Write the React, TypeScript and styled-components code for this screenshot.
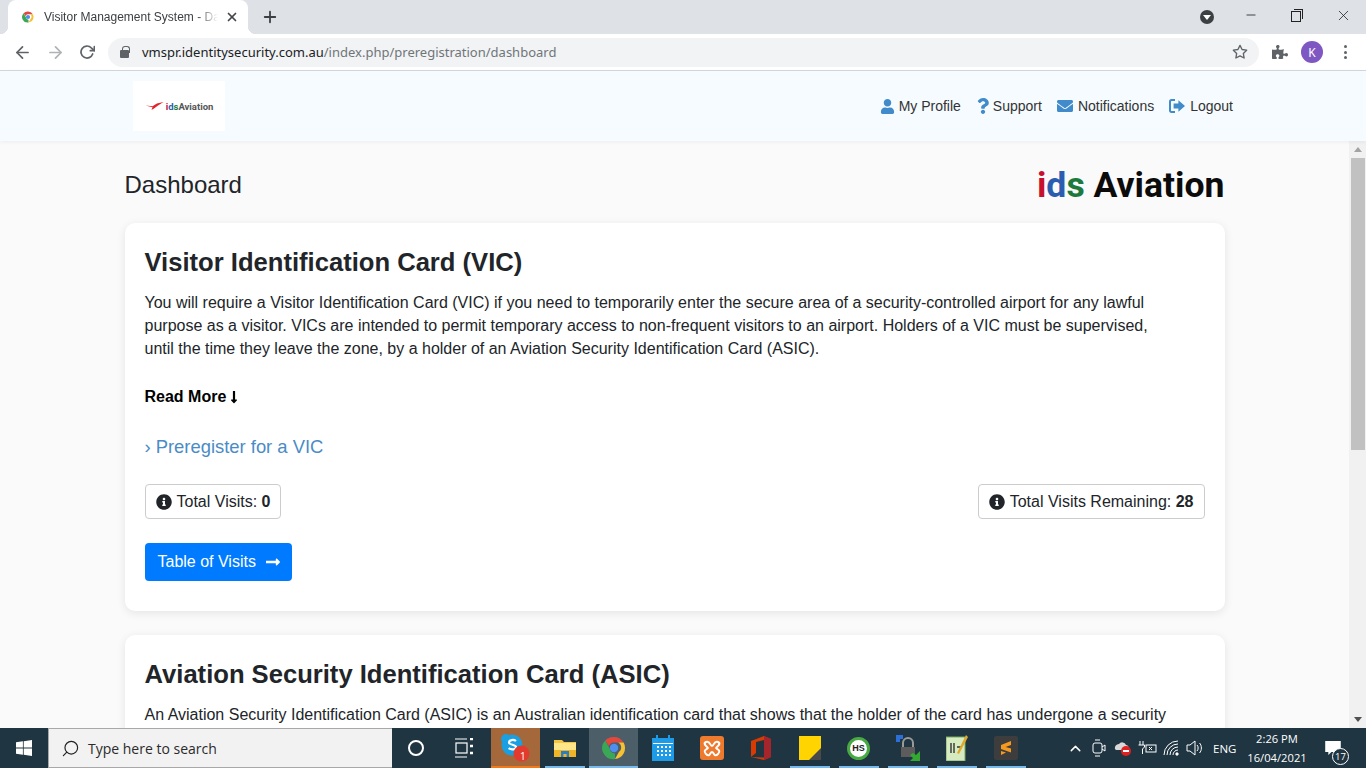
import React from 'react'
import styled, { createGlobalStyle } from 'styled-components'
import {
  FaUser,
  FaQuestion,
  FaEnvelope,
  FaInfoCircle,
  FaLongArrowAltRight,
  FaLongArrowAltDown,
  FaPuzzlePiece,
} from 'react-icons/fa'
import { FiArrowLeft, FiArrowRight, FiRotateCw, FiPlus, FiX, FiMinus, FiStar, FiChevronUp, FiSearch } from 'react-icons/fi'

const GlobalStyle = createGlobalStyle`
  html, body { margin: 0; padding: 0; height: 100%; overflow: hidden; }
  body { font-family: "Liberation Sans", Arial, sans-serif; color: #212529; }
  * { box-sizing: border-box; }
`

const ChromeIcon = () => (
  <svg width="24" height="24" viewBox="0 0 24 24">
    <path d="M12 1a11 11 0 0 1 9.6 5.6H12a5.4 5.4 0 0 0-5.1 3.6L3.2 4.6A11 11 0 0 1 12 1z" fill="#e2483d" />
    <path d="M21.6 6.6A11 11 0 0 1 13 23l4-7.2a5.4 5.4 0 0 0-.9-9.2z" fill="#f6c231" />
    <path d="M13 23A11 11 0 0 1 3.2 4.6L7.7 12.6A5.4 5.4 0 0 0 13 17.4z" fill="#3aa757" />
    <circle cx="12" cy="12" r="4.2" fill="#4f8ef0" />
  </svg>
)

const LogoutIcon = () => (
  <svg width="16" height="14" viewBox="0 0 16 14" fill="#428bca">
    <path d="M0 2.4C0 1 1 0 2.4 0H6v2H2.6c-.4 0-.6.2-.6.6v8.8c0 .4.2.6.6.6H6v2H2.4C1 14 0 13 0 11.6z" />
    <path d="M9.4 1.2 16 7l-6.6 5.8V9.4H4.6V4.6h4.800z" />
  </svg>
)

const PlaneMark = () => (
  <svg width="19" height="8" viewBox="0 0 18 8">
    <path d="M0 3.600 7 4.200 11.400 1.400 18 0 12.500 3.400 8.500 6.500 6 8 7 5.200z" fill="#e2232b" />
  </svg>
)

const WindowsLogo = () => (
  <svg width="16" height="16" viewBox="0 0 16 16" fill="#fff">
    <path d="M0 2.300 6.900 1.300v6.200H0zM7.700 1.200 16 0v7.500H7.700zM0 8.400h6.900v6.300L0 13.700zM7.700 8.400H16V16l-8.300-1.200z" />
  </svg>
)

const TaskViewIcon = () => (
  <svg width="18" height="20" viewBox="0 0 18 20" fill="none" stroke="#fff" strokeWidth="1.2">
    <path d="M0 1h12M0 19h12" />
    <rect x="1" y="5" width="11" height="10" />
    <path d="M15 1h3M15 8h3M15 15h3" strokeWidth="2.4" />
  </svg>
)

const SkypeIcon = () => (
  <svg width="32" height="30" viewBox="0 0 32 30">
    <circle cx="12" cy="12" r="10.5" fill="#1a9fe0" />
    <circle cx="6" cy="6" r="5" fill="#1a9fe0" />
    <circle cx="18" cy="18" r="5" fill="#1a9fe0" />
    <path d="M16 8c-2-1.600-7-1.400-7 1.400 0 3 7 1.800 7 4.800 0 2.600-5 2.800-7.400 1" fill="none" stroke="#fff" strokeWidth="2.2" />
    <circle cx="21.500" cy="20.500" r="8" fill="#e23b2e" />
  </svg>
)

const ExplorerIcon = () => (
  <svg width="22" height="22" viewBox="0 0 22 22">
    <path d="M0 3h8l2 2h12v15H0z" fill="#f4c542" />
    <rect x="0" y="6" width="22" height="7" fill="#fde58a" />
    <rect x="0" y="13" width="22" height="7" fill="#f0b429" />
    <path d="M7 20v-6h8v6h-2.400v-3h-3.200v3z" fill="#2a7fc1" />
  </svg>
)

const CalendarIcon = () => (
  <svg width="22" height="26" viewBox="0 0 22 26" fill="#fff">
    <rect x="0" y="3" width="22" height="23" fill="#1e9be6" />
    <rect x="4" y="0" width="2" height="6" fill="#1e9be6" />
    <rect x="16" y="0" width="2" height="6" fill="#1e9be6" />
    <rect x="1" y="8" width="20" height="1" />
    {[11, 15, 19].map(y =>
      [5, 9, 13, 17].map(x => <rect key={`${x}-${y}`} x={x} y={y} width="2" height="2" />),
    )}
  </svg>
)

const XamppIcon = () => (
  <svg width="24" height="24" viewBox="0 0 24 24">
    <rect width="24" height="24" rx="3" fill="#ee7a2e" />
    <path d="M6 6c4-2 4 4 6 4s2-6 6-4-2 5-2 6 6 2 2 6-4-2-6-2-2 6-6 2 2-5 2-6-6-4-2-6z" fill="none" stroke="#fff" strokeWidth="2" />
  </svg>
)

const OfficeIcon = () => (
  <svg width="20" height="24" viewBox="0 0 20 24">
    <path d="M13 0 20 3v18l-7 3-13-3 13 .6V4L5 6v11l-5 4V5z" fill="#d83b01" />
    <path d="M13 0 20 3v18l-7 3z" fill="#a4262c" />
  </svg>
)

const StickyIcon = () => (
  <svg width="22" height="24" viewBox="0 0 22 24">
    <rect width="22" height="24" fill="#ffd400" />
    <path d="M10 24 22 12v12z" fill="#4a4a4a" />
  </svg>
)

const LockIcon = () => (
  <svg width="24" height="26" viewBox="0 0 24 26">
    <path d="M0 0h7v4H4v3H0z" fill="#2c6fd6" />
    <path d="M7 12V8a5 5 0 0 1 10 0v4" fill="none" stroke="#9a9a9a" strokeWidth="2" />
    <rect x="5" y="12" width="14" height="10" fill="#5c5c5c" />
    <path d="M24 16v10H14l3-3-3-3 3-2 3 2z" fill="#35a832" />
  </svg>
)

const NotepadIcon = () => (
  <svg width="22" height="26" viewBox="0 0 22 26">
    <rect y="2" width="19" height="24" fill="#d6ecc0" stroke="#7aa860" />
    <path d="M5 8v10M8 8v10M11 12h4" stroke="#333" strokeWidth="1.4" />
    <path d="M20 0 11 18l2 1 9-17z" fill="#e0a92c" />
  </svg>
)

const SublimeIcon = () => (
  <svg width="24" height="24" viewBox="0 0 24 24">
    <rect width="24" height="24" rx="2" fill="#3d3d3d" />
    <path d="M17 5 7 9v4l10 3.400v-4L11.600 11 17 9zM7 15l5 1.600-5 2.400z" fill="#f59a1e" />
  </svg>
)

const Screen = styled.div`
  width: 1366px;
  height: 768px;
  display: flex;
  flex-direction: column;
  overflow: hidden;
  background: #fafafa;
`

const TabStrip = styled.div`
  height: 34px;
  background: #dee1e6;
  display: flex;
  align-items: flex-end;
  padding-left: 8px;
`

const Tab = styled.div`
  width: 240px;
  height: 34px;
  background: #fff;
  border-radius: 8px 8px 0 0;
  display: flex;
  align-items: center;
  padding: 0 9px 0 14px;
  color: #3c4043;
  font-size: 12px;
  position: relative;
  &::before, &::after {
    content: '';
    position: absolute;
    bottom: 0;
    width: 8px;
    height: 8px;
  }
  &::before {
    left: -8px;
    background: radial-gradient(circle at 0 0, transparent 8px, #fff 8.5px);
  }
  &::after {
    right: -8px;
    background: radial-gradient(circle at 100% 0, transparent 8px, #fff 8.5px);
  }
`

const Favicon = styled.span`
  display: flex;
  margin-right: 10px;
  svg { width: 12px; height: 12px; }
`

const TabTitle = styled.span`
  flex: 1;
  white-space: nowrap;
  overflow: hidden;
  -webkit-mask-image: linear-gradient(to right, #000 88%, transparent);
  mask-image: linear-gradient(to right, #000 88%, transparent);
`

const TabClose = styled.span`
  display: flex;
  margin-left: 7px;
  color: #44474a;
`

const NewTab = styled.span`
  display: flex;
  align-self: center;
  margin-left: 13px;
  color: #3c4043;
`

const StripSpacer = styled.div`
  flex: 1;
`

const ProfileDot = styled.span`
  width: 14px;
  height: 14px;
  border-radius: 50%;
  background: #3c4043;
  align-self: center;
  margin-right: 14px;
  display: flex;
  align-items: center;
  justify-content: center;
  &::after {
    content: '';
    border-left: 4px solid transparent;
    border-right: 4px solid transparent;
    border-top: 5px solid #fff;
    margin-top: 1px;
  }
`

const WindowButton = styled.span`
  width: 46px;
  align-self: stretch;
  padding-bottom: 4px;
  display: flex;
  align-items: center;
  justify-content: center;
  color: #1f1f1f;
`

const RestoreIcon = styled.span`
  width: 10px;
  height: 11px;
  border: 1px solid #222;
  position: relative;
  margin: 2px 2px 0 0;
  &::after {
    content: '';
    position: absolute;
    top: -3px;
    right: -3px;
    width: 8px;
    height: 9px;
    border-top: 1px solid #222;
    border-right: 1px solid #222;
  }
`

const Toolbar = styled.div`
  height: 37px;
  background: #fff;
  border-bottom: 1px solid #d4d7db;
  display: flex;
  align-items: center;
  padding: 0 0 0 13px;
  flex: none;
`

const NavButton = styled.span<{ $dim?: boolean }>`
  display: flex;
  width: 33px;
  color: ${p => (p.$dim ? '#b0b3b6' : '#5f6368')};
`

const Omnibox = styled.div`
  width: 1151px;
  height: 29px;
  margin-left: -4px;
  background: #f1f3f4;
  border-radius: 15px;
  display: flex;
  align-items: center;
  padding: 0 11px 0 12px;
  font-family: "Noto Sans", sans-serif;
  font-size: 13px;
  color: #70757a;
`

const Padlock = styled.span`
  width: 9px;
  height: 8px;
  background: #5f6368;
  border-radius: 1px;
  margin: 3px 13px 0 0;
  position: relative;
  &::before {
    content: '';
    position: absolute;
    left: 1.5px;
    top: -4px;
    width: 6px;
    height: 6px;
    border: 1.4px solid #5f6368;
    border-bottom: none;
    border-radius: 3px 3px 0 0;
  }
`

const Domain = styled.span`
  color: #202124;
`

const UrlText = styled.span`
  flex: 1;
  white-space: nowrap;
`

const ExtensionIcon = styled.span`
  display: flex;
  margin-left: 13px;
  color: #5f6368;
`

const Avatar = styled.span`
  width: 22px;
  height: 22px;
  margin-left: 13px;
  border-radius: 50%;
  background: #7e57c2;
  color: #fff;
  font-family: "Noto Sans", sans-serif;
  font-size: 12px;
  display: flex;
  align-items: center;
  justify-content: center;
`

const MenuDots = styled.span`
  margin-left: 21px;
  display: flex;
  flex-direction: column;
  gap: 2.5px;
  i {
    width: 3px;
    height: 3px;
    border-radius: 50%;
    background: #5f6368;
    display: block;
  }
`

const SiteHeader = styled.header`
  height: 70px;
  flex: none;
  background: #f5fbff;
  box-shadow: 0 1px 4px rgba(0, 0, 0, 0.06);
  position: relative;
  z-index: 1;
`

const HeaderInner = styled.div`
  width: 1100px;
  height: 100%;
  margin: 0 auto;
  display: flex;
  align-items: center;
  justify-content: space-between;
`

const LogoBox = styled.div`
  width: 92px;
  height: 50px;
  background: #fff;
  display: flex;
  align-items: center;
  justify-content: center;
  gap: 2px;
`

const LogoText = styled.span`
  font-family: "Roboto", sans-serif;
  font-weight: 700;
  font-size: 9.5px;
  color: #555;
`

const Brand = styled.span<{ $color: string }>`
  color: ${p => p.$color};
`

const NavList = styled.nav`
  display: flex;
  gap: 15px;
  align-items: center;
`

const NavItem = styled.a`
  display: flex;
  align-items: center;
  gap: 5px;
  font-size: 14px;
  color: #333;
  svg { color: #428bca; flex: none; }
`

const ProfileGlyph = styled(FaUser)`
  margin-right: -1px;
`

const SupportGlyph = styled(FaQuestion)`
  margin: 0 -3px 0 -1px;
`

const Body = styled.div`
  flex: 1;
  min-height: 0;
  display: flex;
`

const Page = styled.main`
  flex: 1;
  overflow: hidden;
  background: #fafafa;
`

const Container = styled.div`
  width: 1100px;
  margin: 0 auto;
  padding-top: 28px;
`

const PageHead = styled.div`
  display: flex;
  justify-content: space-between;
  align-items: center;
  height: 32px;
  margin-bottom: 22px;
`

const PageTitle = styled.h1`
  margin: 0;
  font-size: 24px;
  font-weight: 400;
  color: #212529;
`

const BigLogo = styled.div`
  font-family: "Roboto", sans-serif;
  font-weight: 700;
  font-size: 35.6px;
  color: #0b0b0b;
  line-height: 32px;
`

const Card = styled.section`
  background: #fff;
  border-radius: 10px;
  box-shadow: 0 2px 10px rgba(0, 0, 0, 0.09);
  padding: 20px 20px 30px;
  margin-bottom: 24px;
`

const CardTitle = styled.h2`
  margin: 0 0 10px;
  font-size: 25.6px;
  line-height: 38px;
  font-weight: 700;
  color: #212529;
`

const Copy = styled.p`
  margin: 0;
  max-width: 1030px;
  font-size: 16px;
  line-height: 23px;
  color: #212529;
`

const ReadMore = styled.a`
  display: flex;
  align-items: center;
  margin-top: 25px;
  height: 24px;
  font-size: 16px;
  font-weight: 700;
  color: #000;
  gap: 4px;
  svg { width: 8px; height: 14px; }
`

const PreLink = styled.a`
  display: block;
  margin-top: 25px;
  height: 26px;
  line-height: 26px;
  font-size: 18.4px;
  color: #4a8bc6;
`

const StatRow = styled.div`
  display: flex;
  justify-content: space-between;
  margin-top: 24px;
`

const Stat = styled.div`
  height: 35px;
  padding: 0 10px;
  display: flex;
  align-items: center;
  gap: 5px;
  border: 1px solid #ccc;
  border-radius: 4px;
  font-size: 16px;
  color: #212529;
`

const PrimaryButton = styled.a`
  display: inline-flex;
  align-items: center;
  gap: 9px;
  margin-top: 24px;
  height: 38px;
  padding: 0 11px 0 13px;
  background: #007bff;
  border-radius: 4px;
  color: #fff;
  font-size: 16px;
`

const ScrollBar = styled.div`
  width: 17px;
  flex: none;
  background: #f1f1f1;
  display: flex;
  flex-direction: column;
  align-items: center;
`

const ScrollArrow = styled.span<{ $down?: boolean }>`
  height: 17px;
  flex: none;
  display: flex;
  align-items: center;
  &::after {
    content: '';
    border-left: 4px solid transparent;
    border-right: 4px solid transparent;
    ${p => (p.$down ? 'border-top: 5px solid #505050;' : 'border-bottom: 5px solid #a3a3a3;')}
  }
`

const ScrollTrack = styled.div`
  flex: 1;
  width: 100%;
  padding: 0 1px 0 2px;
`

const ScrollThumb = styled.div`
  height: 292px;
  background: #c1c1c1;
`

const Taskbar = styled.footer`
  height: 40px;
  flex: none;
  background: #1f3541;
  display: flex;
  align-items: stretch;
  color: #fff;
  position: relative;
  z-index: 2;
`

const StartButton = styled.span`
  width: 48px;
  display: flex;
  align-items: center;
  justify-content: center;
`

const SearchBox = styled.div`
  width: 344px;
  background: #f2f2f2;
  border: 1px solid #a8a8a8;
  border-width: 1px 0 1px 1px;
  display: flex;
  align-items: center;
  gap: 8px;
  padding-left: 12px;
  font-family: "Open Sans", sans-serif;
  font-size: 14px;
  color: #2b2b2b;
  svg { transform: scaleX(-1); }
`

const SystemButton = styled.span`
  width: 48px;
  display: flex;
  align-items: center;
  justify-content: center;
`

const CortanaRing = styled.span`
  width: 16px;
  height: 16px;
  border: 2.5px solid #fff;
  border-radius: 50%;
`

const Apps = styled.div`
  display: flex;
  margin-left: 3px;
`

const AppTile = styled.span<{ $state?: 'alert' | 'active' | 'open' }>`
  width: 49px;
  display: flex;
  align-items: center;
  justify-content: center;
  position: relative;
  background: ${p => (p.$state === 'alert' ? '#a5683a' : p.$state === 'active' ? '#4c5f69' : 'transparent')};
  ${p =>
    p.$state &&
    `&::after {
      content: '';
      position: absolute;
      bottom: 0;
      left: ${p.$state === 'open' ? '5px' : '0'};
      right: ${p.$state === 'open' ? '4px' : '0'};
      height: 2px;
      background: ${p.$state === 'alert' ? '#f07a1a' : '#76b9ed'};
    }`}
`

const UnreadCount = styled.span`
  position: absolute;
  left: 29px;
  top: 21px;
  font-size: 10px;
  font-family: "Open Sans", sans-serif;
  color: #fff;
`

const HsBadge = styled.span`
  width: 23px;
  height: 23px;
  border-radius: 50%;
  background: #fff;
  border: 3px solid #49a942;
  color: #222;
  font-size: 9px;
  font-weight: 700;
  display: flex;
  align-items: center;
  justify-content: center;
`

const Tray = styled.div`
  flex: 1;
  display: flex;
  align-items: center;
  padding-left: 33px;
  font-family: "Open Sans", sans-serif;
  font-size: 11.5px;
`

const TrayIcon = styled.span`
  width: 24px;
  display: flex;
  justify-content: center;
`

const Lang = styled.span`
  margin-left: 6px;
  width: 28px;
`

const Clock = styled.div`
  width: 70px;
  margin-left: 1px;
  text-align: center;
  line-height: 19px;
  font-size: 11.2px;
`

const Notifications = styled.span`
  margin-left: 13px;
  position: relative;
  display: flex;
`

const NoteCount = styled.span`
  position: absolute;
  left: 7px;
  top: 7px;
  width: 17px;
  height: 17px;
  border-radius: 50%;
  background: #1f3541;
  border: 1px solid #fff;
  font-size: 9.5px;
  display: flex;
  align-items: center;
  justify-content: center;
`

const App: React.FC = () => (
  <Screen>
    <GlobalStyle />
    <TabStrip>
      <Tab>
        <Favicon><ChromeIcon /></Favicon>
        <TabTitle>Visitor Management System - Dashboard</TabTitle>
        <TabClose><FiX size={14} strokeWidth={3} /></TabClose>
      </Tab>
      <NewTab><FiPlus size={18} strokeWidth={2.4} /></NewTab>
      <StripSpacer />
      <ProfileDot />
      <WindowButton><FiMinus size={14} strokeWidth={1.4} /></WindowButton>
      <WindowButton><RestoreIcon /></WindowButton>
      <WindowButton><FiX size={17} strokeWidth={1.1} /></WindowButton>
    </TabStrip>

    <Toolbar>
      <NavButton><FiArrowLeft size={19} strokeWidth={2.2} /></NavButton>
      <NavButton $dim><FiArrowRight size={19} strokeWidth={2.2} /></NavButton>
      <NavButton><FiRotateCw size={16} strokeWidth={2.6} /></NavButton>
      <Omnibox>
        <Padlock />
        <UrlText><Domain>vmspr.identitysecurity.com.au</Domain>/index.php/preregistration/dashboard</UrlText>
        <FiStar size={16} color="#5f6368" strokeWidth={2} />
      </Omnibox>
      <ExtensionIcon><FaPuzzlePiece size={16} /></ExtensionIcon>
      <Avatar>K</Avatar>
      <MenuDots><i /><i /><i /></MenuDots>
    </Toolbar>

    <SiteHeader>
      <HeaderInner>
        <LogoBox>
          <PlaneMark />
          <LogoText>
            <Brand $color="#c8102e">i</Brand><Brand $color="#2a5db0">d</Brand><Brand $color="#1c7a3e">s</Brand>Aviation
          </LogoText>
        </LogoBox>
        <NavList>
          <NavItem><ProfileGlyph size={15} />My Profile</NavItem>
          <NavItem><SupportGlyph size={16} />Support</NavItem>
          <NavItem><FaEnvelope size={16} />Notifications</NavItem>
          <NavItem><LogoutIcon />Logout</NavItem>
        </NavList>
      </HeaderInner>
    </SiteHeader>

    <Body>
      <Page>
        <Container>
          <PageHead>
            <PageTitle>Dashboard</PageTitle>
            <BigLogo>
              <Brand $color="#c8102e">i</Brand><Brand $color="#2a5db0">d</Brand><Brand $color="#1c7a3e">s</Brand> Aviation
            </BigLogo>
          </PageHead>

          <Card>
            <CardTitle>Visitor Identification Card (VIC)</CardTitle>
            <Copy>
              You will require a Visitor Identification Card (VIC) if you need to temporarily enter the secure area of a security-controlled airport for any lawful purpose as a visitor. VICs are intended to permit temporary access to non-frequent visitors to an airport. Holders of a VIC must be supervised, until the time they leave the zone, by a holder of an Aviation Security Identification Card (ASIC).
            </Copy>
            <ReadMore>Read More <FaLongArrowAltDown /></ReadMore>
            <PreLink>› Preregister for a VIC</PreLink>
            <StatRow>
              <Stat><FaInfoCircle size={16} /><span>Total Visits: <b>0</b></span></Stat>
              <Stat><FaInfoCircle size={16} /><span>Total Visits Remaining: <b>28</b></span></Stat>
            </StatRow>
            <PrimaryButton>Table of Visits <FaLongArrowAltRight size={16} /></PrimaryButton>
          </Card>

          <Card>
            <CardTitle>Aviation Security Identification Card (ASIC)</CardTitle>
            <Copy>
              An Aviation Security Identification Card (ASIC) is an Australian identification card that shows that the holder of the card has undergone a security
            </Copy>
          </Card>
        </Container>
      </Page>
      <ScrollBar>
        <ScrollArrow />
        <ScrollTrack><ScrollThumb /></ScrollTrack>
        <ScrollArrow $down />
      </ScrollBar>
    </Body>

    <Taskbar>
      <StartButton><WindowsLogo /></StartButton>
      <SearchBox><FiSearch size={19} strokeWidth={1.5} color="#222" />Type here to search</SearchBox>
      <SystemButton><CortanaRing /></SystemButton>
      <SystemButton><TaskViewIcon /></SystemButton>
      <Apps>
        <AppTile $state="alert"><SkypeIcon /><UnreadCount>1</UnreadCount></AppTile>
        <AppTile $state="open"><ExplorerIcon /></AppTile>
        <AppTile $state="active"><ChromeIcon /></AppTile>
        <AppTile><CalendarIcon /></AppTile>
        <AppTile><XamppIcon /></AppTile>
        <AppTile><OfficeIcon /></AppTile>
        <AppTile $state="open"><StickyIcon /></AppTile>
        <AppTile $state="open"><HsBadge>HS</HsBadge></AppTile>
        <AppTile $state="open"><LockIcon /></AppTile>
        <AppTile $state="open"><NotepadIcon /></AppTile>
        <AppTile $state="open"><SublimeIcon /></AppTile>
      </Apps>
      <Tray>
        <TrayIcon><FiChevronUp size={17} /></TrayIcon>
        <TrayIcon>
          <svg width="14" height="18" viewBox="0 0 14 18" fill="none" stroke="#fff"><rect x="1" y="4" width="9" height="10" rx="2" /><path d="M10 8l3-2v6l-3-2M3 1h5M3 17h5" /></svg>
        </TrayIcon>
        <TrayIcon>
          <svg width="18" height="16" viewBox="0 0 18 16"><path d="M1 9a4 4 0 0 1 4-5 4 4 0 0 1 7 1 3 3 0 0 1 2 5H2z" fill="#d8d8d8" /><circle cx="12" cy="11" r="5" fill="#e02020" /><rect x="9" y="10" width="6" height="2" fill="#fff" /></svg>
        </TrayIcon>
        <TrayIcon>
          <svg width="20" height="16" viewBox="0 0 20 16" fill="none" stroke="#fff"><path d="M3 1v4M6 1v4M1.500 5h6v2l-2 2v5" /><rect x="9" y="5" width="10" height="7" /><path d="m12 7 3 3m0-3-3 3" /></svg>
        </TrayIcon>
        <TrayIcon>
          <svg width="18" height="16" viewBox="0 0 18 16" fill="none" stroke="#fff"><path d="M2 15A14 14 0 0 1 16 1M5 15A11 11 0 0 1 16 4M8 15a8 8 0 0 1 8-8M11 15a5 5 0 0 1 5-5" /><circle cx="15" cy="14" r="1.200" fill="#fff" /></svg>
        </TrayIcon>
        <TrayIcon>
          <svg width="18" height="16" viewBox="0 0 18 16" fill="none" stroke="#fff"><path d="M1 5h3l5-4v14l-5-4H1zM11 5c1.500 1.500 1.500 4.500 0 6M13.500 3c2.500 2.500 2.500 7.500 0 10" /></svg>
        </TrayIcon>
        <Lang>ENG</Lang>
        <Clock>2:26 PM<br />16/04/2021</Clock>
        <Notifications>
          <svg width="16" height="14" viewBox="0 0 20 18" fill="#fff"><path d="M0 0h20v14H8l-4 4v-4H0z" /></svg>
          <NoteCount>17</NoteCount>
        </Notifications>
      </Tray>
    </Taskbar>
  </Screen>
)

export default App
